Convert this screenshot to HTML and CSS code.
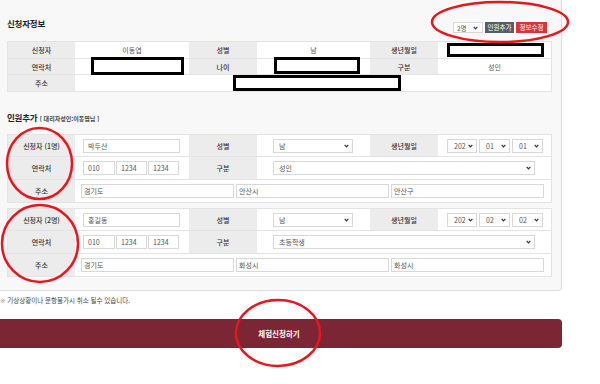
FILE: index.html
```html
<!DOCTYPE html>
<html lang="ko">
<head>
    <meta charset="UTF-8">
    <meta name="viewport" content="width=device-width, initial-scale=1.0">
    <title>체험신청</title>
    <link rel="stylesheet" href="styles.css">
</head>
<body>
    <div class="page">
        <div class="panel">
            <div class="sec-head">
                <h2>신청자정보</h2>
                <div class="tools">
                    <div class="sel count"><span>2명</span><svg class="chev" viewBox="0 0 6 4"><path d="M0.8 0.7 L3 3 L5.2 0.7"/></svg></div>
                    <button class="btn dark">인원추가</button>
                    <button class="btn red">정보수정</button>
                </div>
            </div>

            <div class="grid info">
                <div class="th">신청자</div>
                <div class="td">이동엽</div>
                <div class="th">성별</div>
                <div class="td">남</div>
                <div class="th">생년월일</div>
                <div class="td"></div>

                <div class="th">연락처</div>
                <div class="td"></div>
                <div class="th">나이</div>
                <div class="td"></div>
                <div class="th">구분</div>
                <div class="td">성인</div>

                <div class="th">주소</div>
                <div class="td span5"></div>
            </div>

            <h2 class="sec-title">인원추가 <small>[ 대리자성인:이동엽님 ]</small></h2>

            <div class="grid person">
                <div class="th">신청자 (1명)</div>
                <div class="td c2"><input class="w97" value="박두산"></div>
                <div class="th">성별</div>
                <div class="td c4"><div class="sel w80"><span>남</span><svg class="chev" viewBox="0 0 6 4"><path d="M0.8 0.7 L3 3 L5.2 0.7"/></svg></div></div>
                <div class="th">생년월일</div>
                <div class="td c6">
                    <div class="sel w30"><span>202</span><svg class="chev" viewBox="0 0 6 4"><path d="M0.8 0.7 L3 3 L5.2 0.7"/></svg></div>
                    <div class="sel w31"><span>01</span><svg class="chev" viewBox="0 0 6 4"><path d="M0.8 0.7 L3 3 L5.2 0.7"/></svg></div>
                    <div class="sel w31"><span>01</span><svg class="chev" viewBox="0 0 6 4"><path d="M0.8 0.7 L3 3 L5.2 0.7"/></svg></div>
                </div>

                <div class="th">연락처</div>
                <div class="td c2">
                    <input class="w32" value="010">
                    <input class="w31" value="1234">
                    <input class="w31" value="1234">
                </div>
                <div class="th">구분</div>
                <div class="td c4 span3"><div class="sel w262"><span>성인</span><svg class="chev" viewBox="0 0 6 4"><path d="M0.8 0.7 L3 3 L5.2 0.7"/></svg></div></div>

                <div class="th">주소</div>
                <div class="td addr span5">
                    <input value="경기도">
                    <input value="안산시">
                    <input value="안산구">
                </div>
            </div>

            <div class="grid person">
                <div class="th">신청자 (2명)</div>
                <div class="td c2"><input class="w97" value="홍길동"></div>
                <div class="th">성별</div>
                <div class="td c4"><div class="sel w80"><span>남</span><svg class="chev" viewBox="0 0 6 4"><path d="M0.8 0.7 L3 3 L5.2 0.7"/></svg></div></div>
                <div class="th">생년월일</div>
                <div class="td c6">
                    <div class="sel w30"><span>202</span><svg class="chev" viewBox="0 0 6 4"><path d="M0.8 0.7 L3 3 L5.2 0.7"/></svg></div>
                    <div class="sel w31"><span>02</span><svg class="chev" viewBox="0 0 6 4"><path d="M0.8 0.7 L3 3 L5.2 0.7"/></svg></div>
                    <div class="sel w31"><span>02</span><svg class="chev" viewBox="0 0 6 4"><path d="M0.8 0.7 L3 3 L5.2 0.7"/></svg></div>
                </div>

                <div class="th">연락처</div>
                <div class="td c2">
                    <input class="w32" value="010">
                    <input class="w31" value="1234">
                    <input class="w31" value="1234">
                </div>
                <div class="th">구분</div>
                <div class="td c4 span3"><div class="sel w262"><span>초등학생</span><svg class="chev" viewBox="0 0 6 4"><path d="M0.8 0.7 L3 3 L5.2 0.7"/></svg></div></div>

                <div class="th">주소</div>
                <div class="td addr span5">
                    <input value="경기도">
                    <input value="화성시">
                    <input value="화성시">
                </div>
            </div>
        </div>

        <p class="note"><span class="mark">※</span> 기상상황이나 운항불가시 취소 될수 있습니다.</p>

        <button class="submit">체험신청하기</button>

        <!-- redaction boxes and red marks drawn over the capture -->
        <svg class="marks" width="600" height="384" viewBox="0 0 600 384">
            <g fill="#fff" stroke="#000" stroke-width="3">
                <rect x="92.5" y="58.5" width="90" height="15"/>
                <rect x="275.5" y="58.5" width="83" height="14"/>
                <rect x="448.5" y="44.5" width="94" height="11"/>
                <rect x="234.5" y="76.5" width="165" height="13"/>
            </g>
            <g fill="none" stroke="#e8161d" stroke-width="2.5">
                <ellipse cx="500" cy="22" rx="68" ry="20"/>
                <ellipse cx="39.5" cy="163.5" rx="32.5" ry="35.5"/>
                <ellipse cx="40" cy="243.5" rx="38" ry="38.5"/>
                <ellipse cx="278" cy="333" rx="42" ry="33"/>
            </g>
        </svg>
    </div>
</body>
</html>
```

FILE: styles.css
```css
* {
    box-sizing: border-box;
}

body {
    margin: 0;
    background: #fff;
    color: #555;
    font-family: "Noto Sans CJK KR", "Noto Sans", sans-serif;
}

.page {
    position: relative;
    width: 600px;
    height: 384px;
    overflow: hidden;
}

.panel {
    width: 562px;
    padding: 0 9px 13px 7px;
    background: #f8f8f8;
    border-right: 1px solid #dedede;
    border-bottom: 1px solid #dedede;
    border-bottom-right-radius: 4px;
}

.sec-head {
    display: flex;
    height: 41px;
}

.sec-head h2,
.sec-title {
    margin: 17px 0 0;
    font-size: 8.5px;
    line-height: 12px;
    font-weight: 700;
    color: #222;
    letter-spacing: -0.2px;
}

.sec-title {
    margin: 19px 0 9px;
}

.sec-title small {
    font-size: 6px;
    font-weight: 700;
    color: #444;
    letter-spacing: 0;
}

.tools {
    display: flex;
    gap: 2px;
    height: 11px;
    margin: 22px 5px 0 auto;
}

.btn {
    height: 11px;
    margin: 0;
    padding: 0;
    border: 0;
    color: #fff;
    font-family: inherit;
    font-size: 6.5px;
    line-height: 11px;
    white-space: nowrap;
}

.btn.dark {
    width: 29px;
    background: #575d64;
}

.btn.red {
    width: 31px;
    background: #d7353d;
}

/* tables */
.grid {
    display: grid;
    grid-template-columns: 67px 114px 68px 113px 68px 1fr;
    border: 1px solid #e3e3e3;
    border-bottom: 0;
    background: #fff;
    font-size: 7px;
}

.grid > div {
    display: flex;
    align-items: center;
    border-bottom: 1px solid #e3e3e3;
}

.info {
    grid-template-rows: 17px 16px 17px;
}

.person {
    grid-template-rows: 22px 23px 23px;
}

.person + .person {
    margin-top: 5px;
}

.th {
    justify-content: center;
    background: #ececec;
    color: #333;
    font-weight: 500;
}

.info .td {
    justify-content: center;
}

.span3 {
    grid-column: span 3;
}

.span5 {
    grid-column: span 5;
}

.c2 {
    gap: 1px;
    padding-left: 8px;
}

.c4 {
    padding-left: 16px;
}

.c6 {
    gap: 2px;
    padding-left: 9px;
}

.addr {
    gap: 2px;
    padding-left: 6px;
}

/* form fields */
input,
.sel {
    height: 14px;
    margin: 0;
    border: 1px solid #d8d8d8;
    background: #fff;
    color: #555;
    font-family: inherit;
    font-size: 7px;
}

input {
    padding: 0 4px;
    outline: none;
}

.addr input {
    width: 153px;
    padding: 0 2px;
}

.sel {
    display: flex;
    align-items: center;
    justify-content: space-between;
    padding: 0 3px 0 5px;
}

.sel.count {
    width: 30px;
    height: 11px;
    padding: 0 4px 0 3px;
    font-size: 6.5px;
}

.chev {
    width: 5px;
    height: 4px;
    fill: none;
    stroke: #333;
    stroke-width: 1.5;
}

.w30 { width: 30px; }
.w31 { width: 31px; }
.w32 { width: 32px; }
.w80 { width: 80px; }
.w97 { width: 97px; }
.w262 { width: 262px; }

.c6 .sel {
    padding-left: 6px;
}

/* footer */
.note {
    margin: 4px 0 0;
    font-size: 6.5px;
    line-height: 10px;
    color: #444;
}

.note .mark {
    color: #999;
    font-family: "DejaVu Sans", sans-serif;
}

.submit {
    display: block;
    width: 566px;
    height: 29px;
    margin: 13px 0 0 -4px;
    border: 0;
    border-radius: 4px;
    background: #7b2535;
    color: #fff;
    font-family: inherit;
    font-size: 7.5px;
    font-weight: 700;
}

.marks {
    position: absolute;
    left: 0;
    top: 0;
    pointer-events: none;
}
```
